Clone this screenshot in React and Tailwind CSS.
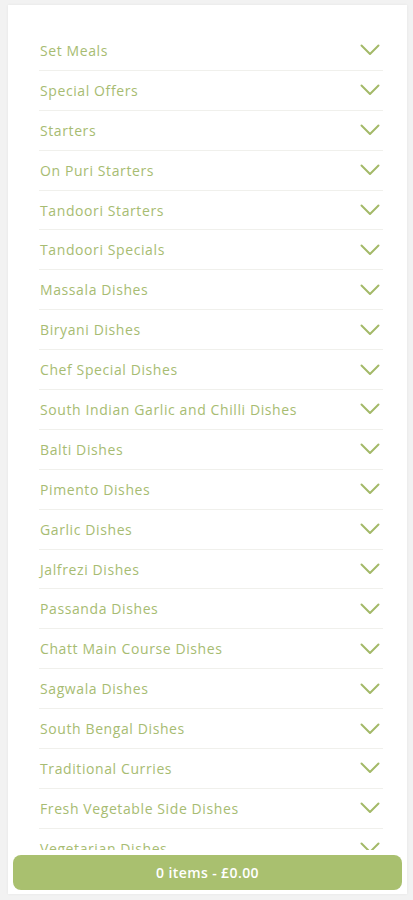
const categories = [
  "Set Meals",
  "Special Offers",
  "Starters",
  "On Puri Starters",
  "Tandoori Starters",
  "Tandoori Specials",
  "Massala Dishes",
  "Biryani Dishes",
  "Chef Special Dishes",
  "South Indian Garlic and Chilli Dishes",
  "Balti Dishes",
  "Pimento Dishes",
  "Garlic Dishes",
  "Jalfrezi Dishes",
  "Passanda Dishes",
  "Chatt Main Course Dishes",
  "Sagwala Dishes",
  "South Bengal Dishes",
  "Traditional Curries",
  "Fresh Vegetable Side Dishes",
  "Vegetarian Dishes",
];

function Chevron() {
  return (
    <svg width="20" height="12" viewBox="0 0 20 12" fill="none" className="mr-[3px]">
      <polyline
        points="1.5,1.5 10,10 18.5,1.5"
        stroke="#a3b968"
        strokeWidth="2"
        strokeLinecap="round"
        strokeLinejoin="round"
      />
    </svg>
  );
}

export default function App() {
  return (
    <div
      className="h-[900px] bg-[#f2f2f2] pt-[5px] pb-[6px] pl-[8px] pr-[6px] overflow-hidden"
      style={{ fontFamily: '"Open Sans", "Noto Sans", sans-serif' }}
    >
      <div className="h-full bg-white flex flex-col shadow-[0_0_3px_rgba(0,0,0,0.06)]">
        {/* Category list */}
        <div className="flex-1 overflow-hidden pt-[26px] pl-[31px] pr-[24px]">
          {categories.map((name) => (
            <div
              key={name}
              className="h-[39.9px] flex items-center justify-between border-b border-[#f0f0ec] pl-[1px]"
            >
              <span className="text-[14px] font-medium text-[#a7bc72] tracking-[0.6px]">{name}</span>
              <Chevron />
            </div>
          ))}
        </div>

        {/* Basket footer */}
        <div className="px-[5px] pt-[5px] pb-[4px] bg-white">
          <button className="w-full h-[35px] rounded-[8px] bg-[#a9c06f] text-white text-[14px] font-semibold tracking-[0.4px]">
            0 items - £0.00
          </button>
        </div>
      </div>
    </div>
  );
}
